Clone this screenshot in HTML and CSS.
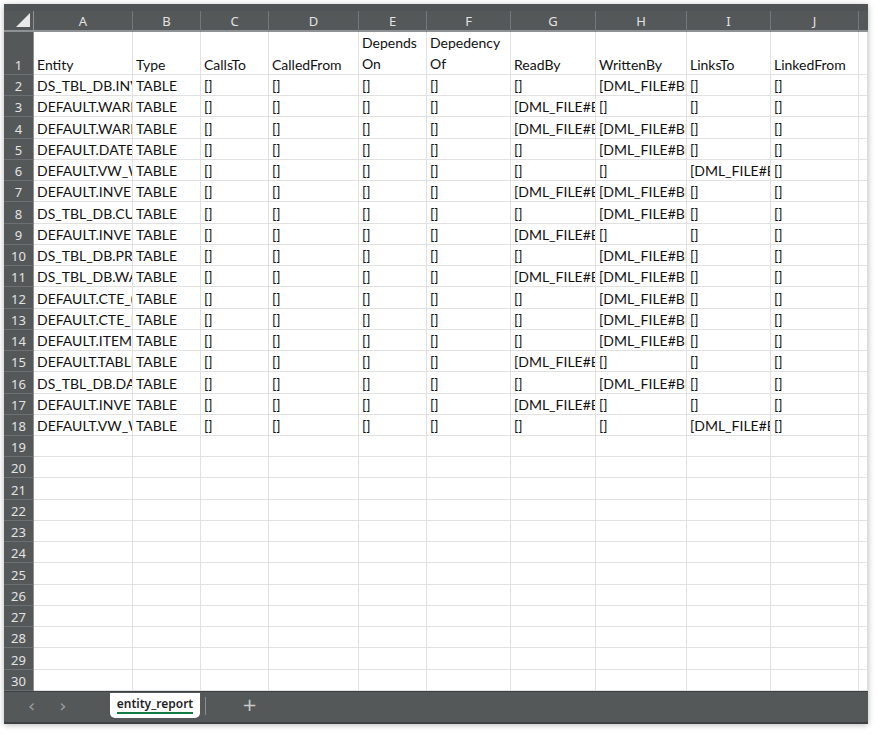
FILE: index.html
```html
<!DOCTYPE html>
<html>
<head>
<meta charset="utf-8">
<link rel="stylesheet" href="styles.css">
</head>
<body>
<div class="window">
  <div class="topstrip"></div>
  <div class="sheet">
    <div class="row hdr">
      <div class="corner"><span class="tri"></span></div>
      <div class="ch">A</div><div class="ch">B</div><div class="ch">C</div><div class="ch">D</div><div class="ch">E</div><div class="ch">F</div><div class="ch">G</div><div class="ch">H</div><div class="ch">I</div><div class="ch">J</div><div class="ch last"></div>
    </div>
    <div class="row r1">
      <div class="rh">1</div>
      <div class="c">Entity</div><div class="c">Type</div><div class="c">CallsTo</div><div class="c">CalledFrom</div><div class="c wrap">Depends On</div><div class="c wrap">Depedency Of</div><div class="c">ReadBy</div><div class="c">WrittenBy</div><div class="c">LinksTo</div><div class="c">LinkedFrom</div><div class="c"></div>
    </div>
    <div class="row"><div class="rh">2</div><div class="c">DS_TBL_DB.INVENTORY</div><div class="c">TABLE</div><div class="c">[]</div><div class="c">[]</div><div class="c">[]</div><div class="c">[]</div><div class="c">[]</div><div class="c">[DML_FILE#BIG_QUERY]</div><div class="c">[]</div><div class="c">[]</div><div class="c"></div></div>
    <div class="row"><div class="rh">3</div><div class="c">DEFAULT.WAREHOUSE</div><div class="c">TABLE</div><div class="c">[]</div><div class="c">[]</div><div class="c">[]</div><div class="c">[]</div><div class="c">[DML_FILE#BIG_QUERY]</div><div class="c">[]</div><div class="c">[]</div><div class="c">[]</div><div class="c"></div></div>
    <div class="row"><div class="rh">4</div><div class="c">DEFAULT.WAREHOUSE_2</div><div class="c">TABLE</div><div class="c">[]</div><div class="c">[]</div><div class="c">[]</div><div class="c">[]</div><div class="c">[DML_FILE#BIG_QUERY]</div><div class="c">[DML_FILE#BIG_QUERY]</div><div class="c">[]</div><div class="c">[]</div><div class="c"></div></div>
    <div class="row"><div class="rh">5</div><div class="c">DEFAULT.DATE_DIM</div><div class="c">TABLE</div><div class="c">[]</div><div class="c">[]</div><div class="c">[]</div><div class="c">[]</div><div class="c">[]</div><div class="c">[DML_FILE#BIG_QUERY]</div><div class="c">[]</div><div class="c">[]</div><div class="c"></div></div>
    <div class="row"><div class="rh">6</div><div class="c">DEFAULT.VW_WAREHOUSE</div><div class="c">TABLE</div><div class="c">[]</div><div class="c">[]</div><div class="c">[]</div><div class="c">[]</div><div class="c">[]</div><div class="c">[]</div><div class="c">[DML_FILE#BIG_QUERY]</div><div class="c">[]</div><div class="c"></div></div>
    <div class="row"><div class="rh">7</div><div class="c">DEFAULT.INVENTORY</div><div class="c">TABLE</div><div class="c">[]</div><div class="c">[]</div><div class="c">[]</div><div class="c">[]</div><div class="c">[DML_FILE#BIG_QUERY]</div><div class="c">[DML_FILE#BIG_QUERY]</div><div class="c">[]</div><div class="c">[]</div><div class="c"></div></div>
    <div class="row"><div class="rh">8</div><div class="c">DS_TBL_DB.CUSTOMER</div><div class="c">TABLE</div><div class="c">[]</div><div class="c">[]</div><div class="c">[]</div><div class="c">[]</div><div class="c">[]</div><div class="c">[DML_FILE#BIG_QUERY]</div><div class="c">[]</div><div class="c">[]</div><div class="c"></div></div>
    <div class="row"><div class="rh">9</div><div class="c">DEFAULT.INVENTORY_2</div><div class="c">TABLE</div><div class="c">[]</div><div class="c">[]</div><div class="c">[]</div><div class="c">[]</div><div class="c">[DML_FILE#BIG_QUERY]</div><div class="c">[]</div><div class="c">[]</div><div class="c">[]</div><div class="c"></div></div>
    <div class="row"><div class="rh">10</div><div class="c">DS_TBL_DB.PRODUCT</div><div class="c">TABLE</div><div class="c">[]</div><div class="c">[]</div><div class="c">[]</div><div class="c">[]</div><div class="c">[]</div><div class="c">[DML_FILE#BIG_QUERY]</div><div class="c">[]</div><div class="c">[]</div><div class="c"></div></div>
    <div class="row"><div class="rh">11</div><div class="c">DS_TBL_DB.WAREHOUSE</div><div class="c">TABLE</div><div class="c">[]</div><div class="c">[]</div><div class="c">[]</div><div class="c">[]</div><div class="c">[DML_FILE#BIG_QUERY]</div><div class="c">[DML_FILE#BIG_QUERY]</div><div class="c">[]</div><div class="c">[]</div><div class="c"></div></div>
    <div class="row"><div class="rh">12</div><div class="c">DEFAULT.CTE_(INV)</div><div class="c">TABLE</div><div class="c">[]</div><div class="c">[]</div><div class="c">[]</div><div class="c">[]</div><div class="c">[]</div><div class="c">[DML_FILE#BIG_QUERY]</div><div class="c">[]</div><div class="c">[]</div><div class="c"></div></div>
    <div class="row"><div class="rh">13</div><div class="c">DEFAULT.CTE_ITEM</div><div class="c">TABLE</div><div class="c">[]</div><div class="c">[]</div><div class="c">[]</div><div class="c">[]</div><div class="c">[]</div><div class="c">[DML_FILE#BIG_QUERY]</div><div class="c">[]</div><div class="c">[]</div><div class="c"></div></div>
    <div class="row"><div class="rh">14</div><div class="c">DEFAULT.ITEM</div><div class="c">TABLE</div><div class="c">[]</div><div class="c">[]</div><div class="c">[]</div><div class="c">[]</div><div class="c">[]</div><div class="c">[DML_FILE#BIG_QUERY]</div><div class="c">[]</div><div class="c">[]</div><div class="c"></div></div>
    <div class="row"><div class="rh">15</div><div class="c">DEFAULT.TABLE1</div><div class="c">TABLE</div><div class="c">[]</div><div class="c">[]</div><div class="c">[]</div><div class="c">[]</div><div class="c">[DML_FILE#BIG_QUERY]</div><div class="c">[]</div><div class="c">[]</div><div class="c">[]</div><div class="c"></div></div>
    <div class="row"><div class="rh">16</div><div class="c">DS_TBL_DB.DATE_DIM</div><div class="c">TABLE</div><div class="c">[]</div><div class="c">[]</div><div class="c">[]</div><div class="c">[]</div><div class="c">[]</div><div class="c">[DML_FILE#BIG_QUERY]</div><div class="c">[]</div><div class="c">[]</div><div class="c"></div></div>
    <div class="row"><div class="rh">17</div><div class="c">DEFAULT.INVENTORY_3</div><div class="c">TABLE</div><div class="c">[]</div><div class="c">[]</div><div class="c">[]</div><div class="c">[]</div><div class="c">[DML_FILE#BIG_QUERY]</div><div class="c">[]</div><div class="c">[]</div><div class="c">[]</div><div class="c"></div></div>
    <div class="row"><div class="rh">18</div><div class="c">DEFAULT.VW_WAREHOUSE_2</div><div class="c">TABLE</div><div class="c">[]</div><div class="c">[]</div><div class="c">[]</div><div class="c">[]</div><div class="c">[]</div><div class="c">[]</div><div class="c">[DML_FILE#BIG_QUERY]</div><div class="c">[]</div><div class="c"></div></div>
    <div class="row"><div class="rh">19</div><div class="c"></div><div class="c"></div><div class="c"></div><div class="c"></div><div class="c"></div><div class="c"></div><div class="c"></div><div class="c"></div><div class="c"></div><div class="c"></div><div class="c"></div></div>
    <div class="row"><div class="rh">20</div><div class="c"></div><div class="c"></div><div class="c"></div><div class="c"></div><div class="c"></div><div class="c"></div><div class="c"></div><div class="c"></div><div class="c"></div><div class="c"></div><div class="c"></div></div>
    <div class="row"><div class="rh">21</div><div class="c"></div><div class="c"></div><div class="c"></div><div class="c"></div><div class="c"></div><div class="c"></div><div class="c"></div><div class="c"></div><div class="c"></div><div class="c"></div><div class="c"></div></div>
    <div class="row"><div class="rh">22</div><div class="c"></div><div class="c"></div><div class="c"></div><div class="c"></div><div class="c"></div><div class="c"></div><div class="c"></div><div class="c"></div><div class="c"></div><div class="c"></div><div class="c"></div></div>
    <div class="row"><div class="rh">23</div><div class="c"></div><div class="c"></div><div class="c"></div><div class="c"></div><div class="c"></div><div class="c"></div><div class="c"></div><div class="c"></div><div class="c"></div><div class="c"></div><div class="c"></div></div>
    <div class="row"><div class="rh">24</div><div class="c"></div><div class="c"></div><div class="c"></div><div class="c"></div><div class="c"></div><div class="c"></div><div class="c"></div><div class="c"></div><div class="c"></div><div class="c"></div><div class="c"></div></div>
    <div class="row"><div class="rh">25</div><div class="c"></div><div class="c"></div><div class="c"></div><div class="c"></div><div class="c"></div><div class="c"></div><div class="c"></div><div class="c"></div><div class="c"></div><div class="c"></div><div class="c"></div></div>
    <div class="row"><div class="rh">26</div><div class="c"></div><div class="c"></div><div class="c"></div><div class="c"></div><div class="c"></div><div class="c"></div><div class="c"></div><div class="c"></div><div class="c"></div><div class="c"></div><div class="c"></div></div>
    <div class="row"><div class="rh">27</div><div class="c"></div><div class="c"></div><div class="c"></div><div class="c"></div><div class="c"></div><div class="c"></div><div class="c"></div><div class="c"></div><div class="c"></div><div class="c"></div><div class="c"></div></div>
    <div class="row"><div class="rh">28</div><div class="c"></div><div class="c"></div><div class="c"></div><div class="c"></div><div class="c"></div><div class="c"></div><div class="c"></div><div class="c"></div><div class="c"></div><div class="c"></div><div class="c"></div></div>
    <div class="row"><div class="rh">29</div><div class="c"></div><div class="c"></div><div class="c"></div><div class="c"></div><div class="c"></div><div class="c"></div><div class="c"></div><div class="c"></div><div class="c"></div><div class="c"></div><div class="c"></div></div>
    <div class="row"><div class="rh">30</div><div class="c"></div><div class="c"></div><div class="c"></div><div class="c"></div><div class="c"></div><div class="c"></div><div class="c"></div><div class="c"></div><div class="c"></div><div class="c"></div><div class="c"></div></div>
  </div>
  <div class="tabbar">
    <div class="nav"><span class="arrow">&#8249;</span><span class="arrow">&#8250;</span></div>
    <div class="tab"><span class="tabname">entity_report</span></div>
    <div class="sep"></div>
    <div class="plus">+</div>
  </div>
</div>
</body>
</html>
```

FILE: styles.css
```css
* { box-sizing: border-box; }
html, body { margin: 0; padding: 0; background: #ffffff; }
body { width: 878px; height: 734px; overflow: hidden; }

.window {
  margin: 4px 0 0 4px;
  width: 864px;
  height: 720px;
  display: flex;
  flex-direction: column;
  background: #ffffff;
  box-shadow: 0 1px 6px rgba(0,0,0,0.28);
  overflow: hidden;
}

.topstrip { height: 7px; background: #4f5356; flex: none; }

.sheet { flex: none; display: flex; flex-direction: column; }

.row {
  display: grid;
  grid-template-columns: 30px 99px 68px 68px 90px 68px 84px 85px 91px 84px 88px 9px;
  height: 21.24px;
}
.row.hdr { height: 21px; }
.row.r1 { height: 43px; }

.corner {
  background: #545859;
  border-right: 1px solid #8e9294;
  border-bottom: 2px solid #8e9294;
  position: relative;
}
.tri {
  position: absolute;
  right: 3px;
  bottom: 3px;
  width: 0; height: 0;
  border-left: 14px solid transparent;
  border-bottom: 14px solid #e8e8e8;
}

.ch {
  background: #545859;
  color: #e3e3e3;
  font-family: "Noto Sans", "Open Sans", sans-serif;
  font-size: 13px;
  display: flex;
  align-items: center;
  justify-content: center;
  border-right: 1px solid #74787a;
  border-bottom: 2px solid #8e9294;
}
.ch.last { border-right: none; }

.rh {
  background: #545859;
  color: #e3e3e3;
  font-family: "Noto Sans", "Open Sans", sans-serif;
  font-size: 13px;
  display: flex;
  align-items: flex-end;
  justify-content: center;
  padding-bottom: 0;
  border-right: 1px solid #8e9294;
  border-bottom: 1px solid #6c7072;
  line-height: 18px;
}

.c {
  font-family: "Lato", "Liberation Sans", sans-serif;
  font-size: 14px;
  color: #111111;
  white-space: nowrap;
  overflow: hidden;
  padding: 0 0 0 3px;
  border-right: 1px solid #e1e1e1;
  border-bottom: 1px solid #e1e1e1;
  display: flex;
  align-items: flex-end;
  line-height: 18px;
}
.c.wrap { white-space: normal; line-height: 21px; padding-bottom: 0; }
.row .c:last-child { border-right: 1px solid #dcdcdc; }

.tabbar {
  flex: 1;
  background: #545859;
  border-top: 1px solid #3e4143;
  border-bottom: 2px solid #3e4143;
  display: flex;
  align-items: flex-start;
  position: relative;
}
.nav { width: 106px; display: flex; padding-left: 24px; gap: 24px; height: 28px; align-items: center; }
.arrow { color: #9a9ea0; font-family: "DejaVu Sans", sans-serif; font-size: 18px; line-height: 1; }
.tab {
  margin-top: 1px;
  width: 90px;
  height: 25px;
  background: #ffffff;
  border-radius: 0 0 5px 5px;
  display: flex;
  justify-content: center;
  align-items: flex-start;
  padding-top: 3px;
}
.tabname {
  font-family: "Noto Sans", "Open Sans", sans-serif;
  font-size: 12px;
  font-weight: 600;
  color: #1f1f1f;
  line-height: 16px;
  border-bottom: 2px solid #107c41;
}
.sep { width: 1px; height: 18px; background: #8a8e90; margin: 5px 0 0 5px; }
.plus {
  margin-left: 36px;
  color: #c8cacb;
  font-family: "DejaVu Sans", sans-serif;
  font-size: 18px;
  line-height: 26px;
}
```
